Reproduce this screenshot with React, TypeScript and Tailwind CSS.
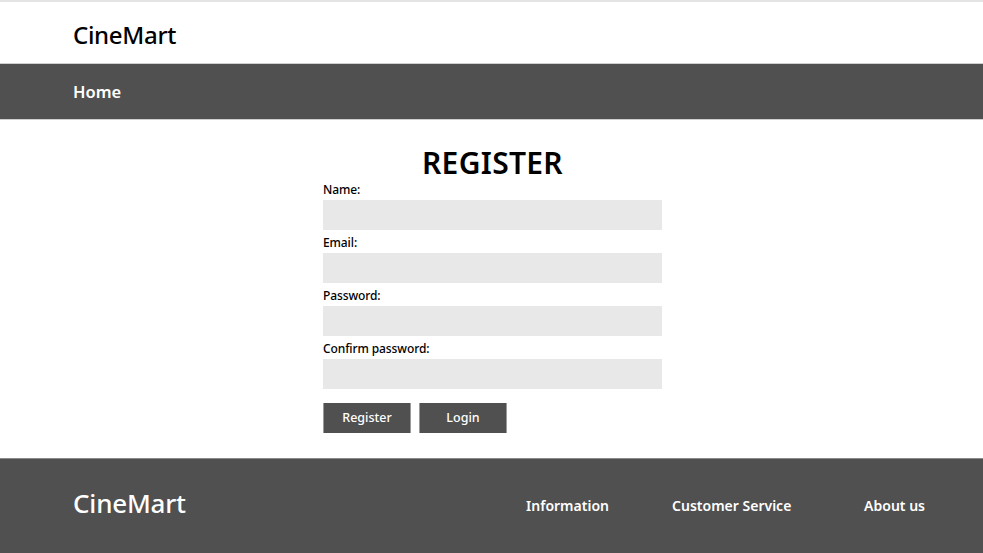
import React from "react";

export default function App() {
  const font = { fontFamily: '"Noto Sans", "Open Sans", sans-serif' };
  const fields = ["Name:", "Email:", "Password:", "Confirm password:"];
  return (
    <div className="w-[983px] h-[553px] flex flex-col bg-white overflow-hidden" style={font}>
      <header className="h-[63px] shrink-0 border-t-2 border-[#e4e4e4] flex items-center px-[73px] pt-[5px]">
        <span className="text-[24px] font-medium text-black tracking-[-0.3px] leading-none">CineMart</span>
      </header>
      <nav className="h-[57px] shrink-0 bg-[#505050] border-y border-[#cfcfcf] flex items-center px-[73px] pt-[2px]">
        <span className="text-[16.5px] font-semibold text-white leading-none">Home</span>
      </nav>
      <main className="flex-1 flex justify-center pl-[2px]">
        <div className="w-[339px] flex flex-col pt-[23px]">
          <h1 className="text-center text-[30px] font-semibold text-black leading-[40px] tracking-[0.3px]">REGISTER</h1>
          <div className="flex flex-col">
            {fields.map((f, i) => (
              <div key={f} className={i === 0 ? "flex flex-col" : "flex flex-col mt-[6px]"}>
                <label className="text-[12px] font-medium text-black leading-[14px] mb-[3px] tracking-[-0.1px]">{f}</label>
                <div className="h-[30px] bg-[#e8e8e8]" />
              </div>
            ))}
          </div>
          <div className="flex gap-[8px] mt-[14px]">
            <button className="w-[88px] h-[30px] bg-[#505050] text-white text-[12.5px] font-medium border-x border-[#9a9a9a]">Register</button>
            <button className="w-[88px] h-[30px] bg-[#505050] text-white text-[12.5px] font-medium border-x border-[#9a9a9a]">Login</button>
          </div>
        </div>
      </main>
      <footer className="h-[95px] shrink-0 bg-[#505050] border-t border-[#8a8a8a] flex items-start pl-[73px] pr-[58px] pt-[26px]">
        <span className="text-[26px] font-medium text-white leading-[36px] tracking-[-0.2px]">CineMart</span>
        <div className="ml-auto flex items-center mt-[14px] text-white text-[14px] font-semibold leading-none">
          <span className="w-[146px]">Information</span>
          <span className="w-[192px]">Customer Service</span>
          <span>About us</span>
        </div>
      </footer>
    </div>
  );
}
